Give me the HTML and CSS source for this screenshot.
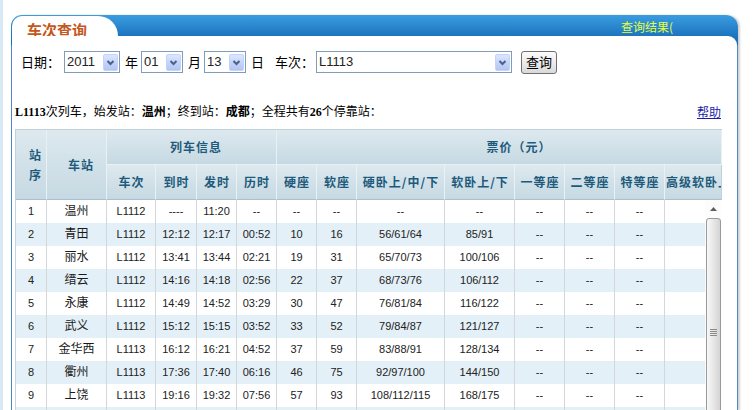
FILE: index.html
```html
<!DOCTYPE html>
<html lang="zh-CN">
<head>
<meta charset="utf-8">
<title>车次查询</title>
<link rel="stylesheet" href="styles.css">
</head>
<body>
<div class="panel">
  <div class="head">
    <div class="tab">车次查询</div>
    <div class="result">查询结果(</div>
  </div>
  <div class="content">
    <div class="form">
      <span class="lbl lbl-date">日期：</span>
      <div class="sel sel-year"><span class="val">2011</span><span class="arr"><svg viewBox="0 0 15 17" width="15" height="17"><polyline points="4.5,7 7.5,10 10.5,7"/></svg></span></div>
      <span class="unit">年</span>
      <div class="sel sel-sm"><span class="val">01</span><span class="arr"><svg viewBox="0 0 15 17" width="15" height="17"><polyline points="4.5,7 7.5,10 10.5,7"/></svg></span></div>
      <span class="unit">月</span>
      <div class="sel sel-sm"><span class="val">13</span><span class="arr"><svg viewBox="0 0 15 17" width="15" height="17"><polyline points="4.5,7 7.5,10 10.5,7"/></svg></span></div>
      <span class="unit unit-day">日</span>
      <span class="lbl lbl-train">车次：</span>
      <div class="sel sel-train"><span class="val">L1113</span><span class="arr"><svg viewBox="0 0 15 17" width="15" height="17"><polyline points="4.5,7 7.5,10 10.5,7"/></svg></span></div>
      <button class="btn" type="button">查询</button>
    </div>
    <div class="info">
      <span class="summary"><b>L1113</b>次列车，始发站：<b>温州</b>；终到站：<b>成都</b>；全程共有<b>26</b>个停靠站：</span>
      <a class="help" href="#">帮助</a>
    </div>
    <div class="thead-wrap">
      <table class="grid grid-head">
        <colgroup>
          <col class="w31"><col class="w60"><col class="w49"><col class="w41"><col class="w40"><col class="w40"><col class="w40"><col class="w40"><col class="w88"><col class="w70"><col class="w50"><col class="w50"><col class="w50"><col class="w57">
        </colgroup>
        <tr class="r1">
          <th rowspan="2" class="span2">站<br>序</th>
          <th rowspan="2" class="span2">车站</th>
          <th colspan="4">列车信息</th>
          <th colspan="8" class="c-price">票价（元）</th>
        </tr>
        <tr class="r2">
          <th>车次</th><th>到时</th><th>发时</th><th>历时</th><th>硬座</th><th>软座</th><th>硬卧上/中/下</th><th>软卧上/下</th><th>一等座</th><th>二等座</th><th>特等座</th><th class="c-last">高级软卧上/下</th>
        </tr>
      </table>
    </div>
    <div class="tbody-wrap">
      <table class="grid grid-body">
        <colgroup>
          <col class="w31"><col class="w60"><col class="w49"><col class="w41"><col class="w40"><col class="w40"><col class="w40"><col class="w40"><col class="w88"><col class="w70"><col class="w50"><col class="w50"><col class="w50"><col class="w40">
        </colgroup>
        <tr><td>1</td><td class="stn">温州</td><td>L1112</td><td>----</td><td>11:20</td><td>--</td><td>--</td><td>--</td><td>--</td><td>--</td><td>--</td><td>--</td><td>--</td><td></td></tr>
        <tr><td>2</td><td class="stn">青田</td><td>L1112</td><td>12:12</td><td>12:17</td><td>00:52</td><td>10</td><td>16</td><td>56/61/64</td><td>85/91</td><td>--</td><td>--</td><td>--</td><td></td></tr>
        <tr><td>3</td><td class="stn">丽水</td><td>L1112</td><td>13:41</td><td>13:44</td><td>02:21</td><td>19</td><td>31</td><td>65/70/73</td><td>100/106</td><td>--</td><td>--</td><td>--</td><td></td></tr>
        <tr><td>4</td><td class="stn">缙云</td><td>L1112</td><td>14:16</td><td>14:18</td><td>02:56</td><td>22</td><td>37</td><td>68/73/76</td><td>106/112</td><td>--</td><td>--</td><td>--</td><td></td></tr>
        <tr><td>5</td><td class="stn">永康</td><td>L1112</td><td>14:49</td><td>14:52</td><td>03:29</td><td>30</td><td>47</td><td>76/81/84</td><td>116/122</td><td>--</td><td>--</td><td>--</td><td></td></tr>
        <tr><td>6</td><td class="stn">武义</td><td>L1112</td><td>15:12</td><td>15:15</td><td>03:52</td><td>33</td><td>52</td><td>79/84/87</td><td>121/127</td><td>--</td><td>--</td><td>--</td><td></td></tr>
        <tr><td>7</td><td class="stn">金华西</td><td>L1113</td><td>16:12</td><td>16:21</td><td>04:52</td><td>37</td><td>59</td><td>83/88/91</td><td>128/134</td><td>--</td><td>--</td><td>--</td><td></td></tr>
        <tr><td>8</td><td class="stn">衢州</td><td>L1113</td><td>17:36</td><td>17:40</td><td>06:16</td><td>46</td><td>75</td><td>92/97/100</td><td>144/150</td><td>--</td><td>--</td><td>--</td><td></td></tr>
        <tr><td>9</td><td class="stn">上饶</td><td>L1113</td><td>19:16</td><td>19:32</td><td>07:56</td><td>57</td><td>93</td><td>108/112/115</td><td>168/175</td><td>--</td><td>--</td><td>--</td><td></td></tr>
        <tr><td>10</td><td class="stn">鹰潭</td><td>L1113</td><td>20:28</td><td>20:34</td><td>09:08</td><td>65</td><td>104</td><td>121/126/130</td><td>189/197</td><td>--</td><td>--</td><td>--</td><td></td></tr>
      </table>
      <div class="vscroll">
        <div class="sb-up"><svg viewBox="0 0 7 4" width="7" height="4"><polygon points="0,4 3.5,0 7,4"/></svg></div>
        <div class="sb-thumb"><svg viewBox="0 0 7 8" width="7" height="8"><path d="M0 0.5H7M0 2.5H7M0 4.5H7M0 6.5H7"/></svg></div>
      </div>
    </div>
  </div>
</div>
</body>
</html>
```

FILE: styles.css
```css
* { box-sizing: border-box; }

html, body {
  margin: 0;
  padding: 0;
  height: 410px;
  overflow: hidden;
  background: #fff;
}

body {
  border-left: 3px solid #d8e9f6;
  font-family: "Noto Sans CJK SC", sans-serif;
  color: #000;
}

.panel {
  margin: 15px 0 0 8px;
  width: 727px;
  height: 395px;
  padding: 0 1px;
  border-radius: 11px 12px 0 0;
  background: linear-gradient(to bottom, #3a9de0 0, #1d74bf 21px, #1a69b1 30px, #4f89c4 30px);
  box-shadow: 2px 0 2px rgba(0, 0, 0, 0.18);
  display: flex;
  flex-direction: column;
}

.head {
  display: flex;
  height: 21px;
  flex: none;
}

.tab {
  margin-top: 1px;
  width: 106px;
  height: 20px;
  background: #fff;
  border-radius: 10px 20px 0 0 / 10px 20px 0 0;
  padding: 6px 0 0 15px;
  font: bold 15px/15px "Noto Sans CJK SC", sans-serif;
  color: #c4571c;
  white-space: nowrap;
}

.result {
  margin: 0 62px 0 auto;
  width: 54px;
  overflow: hidden;
  white-space: nowrap;
  padding-top: 1px;
  font: 12px/21px "Noto Sans CJK SC", sans-serif;
  color: #e4ff3c;
}

.content {
  flex: 1;
  min-height: 0;
  background: #fff;
  border-top-right-radius: 9px;
  padding: 15px 15px 0 3px;
  display: flex;
  flex-direction: column;
}

/* form row */
.form {
  display: flex;
  align-items: center;
  height: 22px;
  margin-left: 6px;
  font: 13px/22px "Noto Sans CJK SC", sans-serif;
  flex: none;
}

.lbl-date { margin-right: 4px; }
.unit { margin: 0 3px 0 5px; }
.unit-day { margin-right: 11px; }
.lbl-train { margin-right: 2px; }

.sel {
  height: 22px;
  border: 1px solid #7f9db9;
  background: #fff;
  display: flex;
  align-items: center;
  justify-content: space-between;
  padding: 0 1px 0 2px;
  font: 13px/20px "Liberation Sans", sans-serif;
  color: #222;
}

.sel-year { width: 56px; }
.sel-sm { width: 42px; }
.sel-train { width: 196px; }

.arr {
  width: 15px;
  height: 17px;
  border: 1px solid #c3d3fb;
  border-radius: 2px;
  background: linear-gradient(to bottom, #dde7fe, #c2d3fa 55%, #b3c6f3);
  display: flex;
}

.arr svg {
  margin: -1px;
  fill: none;
  stroke: #4d6185;
  stroke-width: 2;
}

.btn {
  margin-left: 9px;
  width: 36px;
  height: 23px;
  padding: 0;
  border: 1px solid #707070;
  border-radius: 3px;
  background: linear-gradient(to bottom, #fbfbfb, #ececec 50%, #d9d9d9);
  font: 13px/20px "Noto Sans CJK SC", sans-serif;
  color: #000;
}

/* info line */
.info {
  margin-top: 31px;
  height: 16px;
  display: flex;
  justify-content: space-between;
  font: 12px/16px "Liberation Serif", "Noto Sans CJK SC", serif;
  color: #000;
  flex: none;
}

.info b { font-weight: bold; }

.help {
  margin-right: 1px;
  color: #1c1ca8;
  text-decoration: underline;
  font-family: "Noto Sans CJK SC", sans-serif;
}

/* tables */
.grid {
  border-collapse: separate;
  border-spacing: 0;
  table-layout: fixed;
}

.w31 { width: 31px; }
.w60 { width: 60px; }
.w49 { width: 49px; }
.w41 { width: 41px; }
.w40 { width: 40px; }
.w88 { width: 88px; }
.w70 { width: 70px; }
.w50 { width: 50px; }
.w57 { width: 57px; }

.thead-wrap {
  margin-top: 9px;
  width: 707px;
  overflow: hidden;
  flex: none;
}

.grid-head {
  width: 707px;
  border-top: 1px solid #bfd2dc;
  border-left: 1px solid #bfd2dc;
}

.grid-head th {
  padding: 0 0 0 1px;
  background: linear-gradient(to bottom, #dde9ef, #c6d9e2);
  border-right: 1px solid #e9f1f4;
  color: #1d5a7b;
  font: bold 12px/20px "Noto Sans CJK SC", sans-serif;
  letter-spacing: 1px;
  text-align: center;
  vertical-align: middle;
  white-space: nowrap;
  overflow: hidden;
}

.r1 { height: 35px; }
.r2 { height: 35px; }

.r1 th {
  padding-left: 9px;
  border-bottom: 1px solid #e9f1f4;
}

.r1 th.span2 { border-bottom: 1px solid #a9c1cd; }
.r1 th.c-price { padding-left: 40px; }

.r2 th { border-bottom: 1px solid #a9c1cd; }
.r2 th.c-last {
  text-align: left;
  padding-left: 1px;
  border-right-color: #bfd2dc;
}

.tbody-wrap {
  flex: 1;
  min-height: 0;
  display: flex;
  align-items: flex-start;
  overflow: hidden;
}

.grid-body {
  width: 690px;
  flex: none;
  border-left: 1px solid #c6d3da;
}

.grid-body tr { height: 23px; }

.grid-body td {
  padding: 0;
  border-right: 1px solid #d3d7da;
  text-align: center;
  vertical-align: middle;
  font: 11px/23px "Liberation Sans", "Noto Sans CJK SC", sans-serif;
  color: #222;
  white-space: nowrap;
  overflow: hidden;
}

.grid-body tr:nth-child(even) td { background: #e4f0f7; }
.grid-body td:last-child { border-right: none; }
.grid-body td.stn { font-size: 12px; color: #1a1a1a; }

/* scrollbar */
.vscroll {
  width: 16px;
  flex: none;
  align-self: stretch;
  background: #fcfcfc;
  display: flex;
  flex-direction: column;
  align-items: center;
}

.sb-up {
  width: 100%;
  height: 18px;
  flex: none;
  display: flex;
  align-items: center;
  justify-content: center;
}

.sb-up svg { fill: #5e5e5e; }

.sb-thumb {
  width: 15px;
  height: 230px;
  flex: none;
  border: 1px solid #9b9b9b;
  border-radius: 3px;
  background: linear-gradient(to right, #f7f7f7, #e9e9e9 45%, #d4d4d4);
  display: flex;
  align-items: center;
  justify-content: center;
}

.sb-thumb svg {
  fill: none;
  stroke: #8a8a8a;
  stroke-width: 1;
}
```
